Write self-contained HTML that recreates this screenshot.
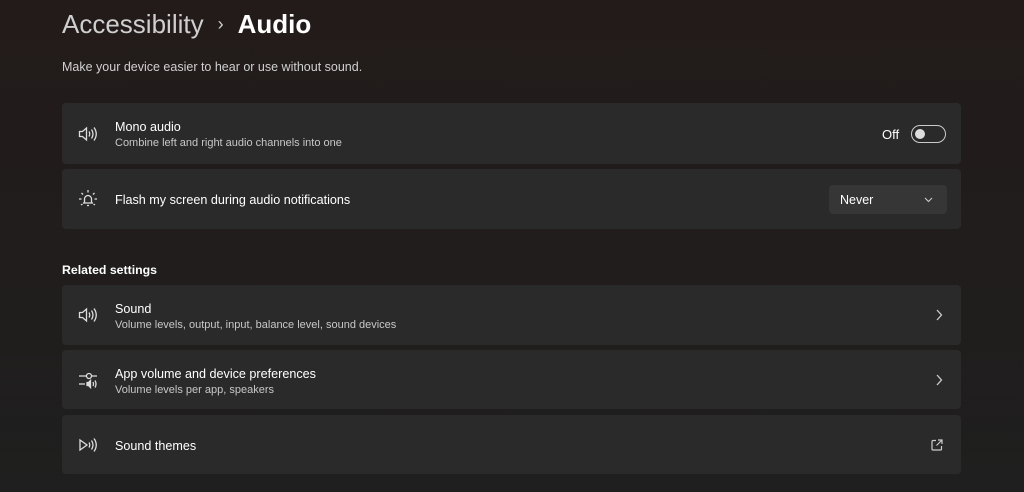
<!DOCTYPE html><html><head><style>
body{margin:0;width:1024px;height:492px;overflow:hidden;background:linear-gradient(180deg,#221b1a 0%,#201d1c 50%,#1f1f1f 100%);font-family:"Segoe UI","Liberation Sans",sans-serif;color:#fff;position:relative}
.t{position:absolute;left:62px;top:9px;font-size:26px;white-space:nowrap}
.t .a{color:#cfcfcf}.t .s{color:#cfcfcf;font-size:18px;margin:0 14px;position:relative;top:-3px}
.d{position:absolute;left:62px;top:60px;font-size:12.5px;color:#d0d0d0}
.c{position:absolute;left:62px;width:899px;background:#2b2a2a;border-radius:4px}
.ic{position:absolute;left:16px;top:50%;transform:translateY(-50%)}
.ti{position:absolute;left:53px;font-size:12.6px;color:#fff}
.su{position:absolute;left:53px;font-size:11px;color:#c8c8c8}
.h{position:absolute;left:62px;top:263px;font-size:12.3px;font-weight:bold}
.chev{position:absolute;right:18px;top:50%;transform:translateY(-50%)}
</style></head><body>
<div class="t"><span class="a">Accessibility</span><span class="s">›</span><span style="font-weight:600">Audio</span></div>
<div class="d">Make your device easier to hear or use without sound.</div>

<div class="c" style="top:103px;height:61px">
<svg class="ic" width="20" height="16" viewBox="0 0 20 16" fill="none" stroke="#ddd" stroke-width="1.3"><path d="M1.5 5.5h3l4-3.5v12l-4-3.5h-3z"/><path d="M11 5.5q1.5 2.5 0 5M13.5 3.5q3 4.5 0 9M16 1.5q4.5 6.5 0 13"/></svg>
<div class="ti" style="top:17px">Mono audio</div><div class="su" style="top:34px">Combine left and right audio channels into one</div>
<div style="position:absolute;left:820px;top:24px;font-size:13px">Off</div>
<div style="position:absolute;left:849px;top:22px;width:35px;height:18px;border:1.3px solid #ccc;border-radius:10px;box-sizing:border-box"><div style="position:absolute;left:3px;top:2.5px;width:10px;height:10px;border-radius:50%;background:#ddd"></div></div>
</div>

<div class="c" style="top:169px;height:60px">
<svg class="ic" width="20" height="20" viewBox="0 0 20 20" fill="none" stroke="#ddd" stroke-width="1.3"><path d="M6.5 14v-4a3.5 3.5 0 0 1 7 0v4M5 14h10M9 16.5h2"/><path d="M10 1v2.5M3.5 4l1.5 1.5M16.5 4L15 5.5M1 10h2.5M19 10h-2.5M3 16l1.5-1M17 16l-1.5-1"/></svg>
<div class="ti" style="top:24px">Flash my screen during audio notifications</div>
<div style="position:absolute;left:767px;top:16px;width:118px;height:29px;background:#373636;border-radius:4px"><span style="position:absolute;left:11px;top:8px;font-size:12.5px">Never</span><svg style="position:absolute;right:14px;top:12px" width="9" height="6" viewBox="0 0 9 6" fill="none" stroke="#ccc" stroke-width="1.1"><path d="M1 1l3.5 3.5L8 1"/></svg></div>
</div>

<div class="h">Related settings</div>

<div class="c" style="top:285px;height:60px">
<svg class="ic" width="20" height="16" viewBox="0 0 20 16" fill="none" stroke="#ddd" stroke-width="1.3"><path d="M1.5 5.5h3l4-3.5v12l-4-3.5h-3z"/><path d="M11 5.5q1.5 2.5 0 5M13.5 3.5q3 4.5 0 9M16 1.5q4.5 6.5 0 13"/></svg>
<div class="ti" style="top:17px">Sound</div><div class="su" style="top:34px">Volume levels, output, input, balance level, sound devices</div>
<svg class="chev" width="8" height="12" viewBox="0 0 8 12" fill="none" stroke="#ccc" stroke-width="1.3"><path d="M2 1l4.5 5L2 11"/></svg>
</div>

<div class="c" style="top:350px;height:59px">
<svg class="ic" width="20" height="20" viewBox="0 0 20 20" fill="none" stroke="#ddd" stroke-width="1.3"><path d="M1 6h7M14 6h5"/><circle cx="11" cy="6" r="2.5"/><path d="M1 14h6"/><path d="M9 12.5h1.5l2-2v7l-2-2H9z" fill="#ddd"/><path d="M15 12q1 2 0 4M17 10.5q2 3.5 0 7"/></svg>
<div class="ti" style="top:17px">App volume and device preferences</div><div class="su" style="top:34px">Volume levels per app, speakers</div>
<svg class="chev" width="8" height="12" viewBox="0 0 8 12" fill="none" stroke="#ccc" stroke-width="1.3"><path d="M2 1l4.5 5L2 11"/></svg>
</div>

<div class="c" style="top:415px;height:59px">
<svg class="ic" width="20" height="16" viewBox="0 0 20 16" fill="none" stroke="#ddd" stroke-width="1.3"><path d="M2 3v10l7-5z"/><path d="M11 5.5q1.5 2.5 0 5M13.5 3.5q3 4.5 0 9M16 1.5q4.5 6.5 0 13"/></svg>
<div class="ti" style="top:24px">Sound themes</div>
<svg class="chev" width="12" height="12" viewBox="0 0 12 12" fill="none" stroke="#ccc" stroke-width="1.2"><path d="M5 1.5H2a1 1 0 0 0-1 1V10a1 1 0 0 0 1 1h7.5a1 1 0 0 0 1-1V7"/><path d="M7 1h4v4M11 1L5.5 6.5"/></svg>
</div>
</body></html>
